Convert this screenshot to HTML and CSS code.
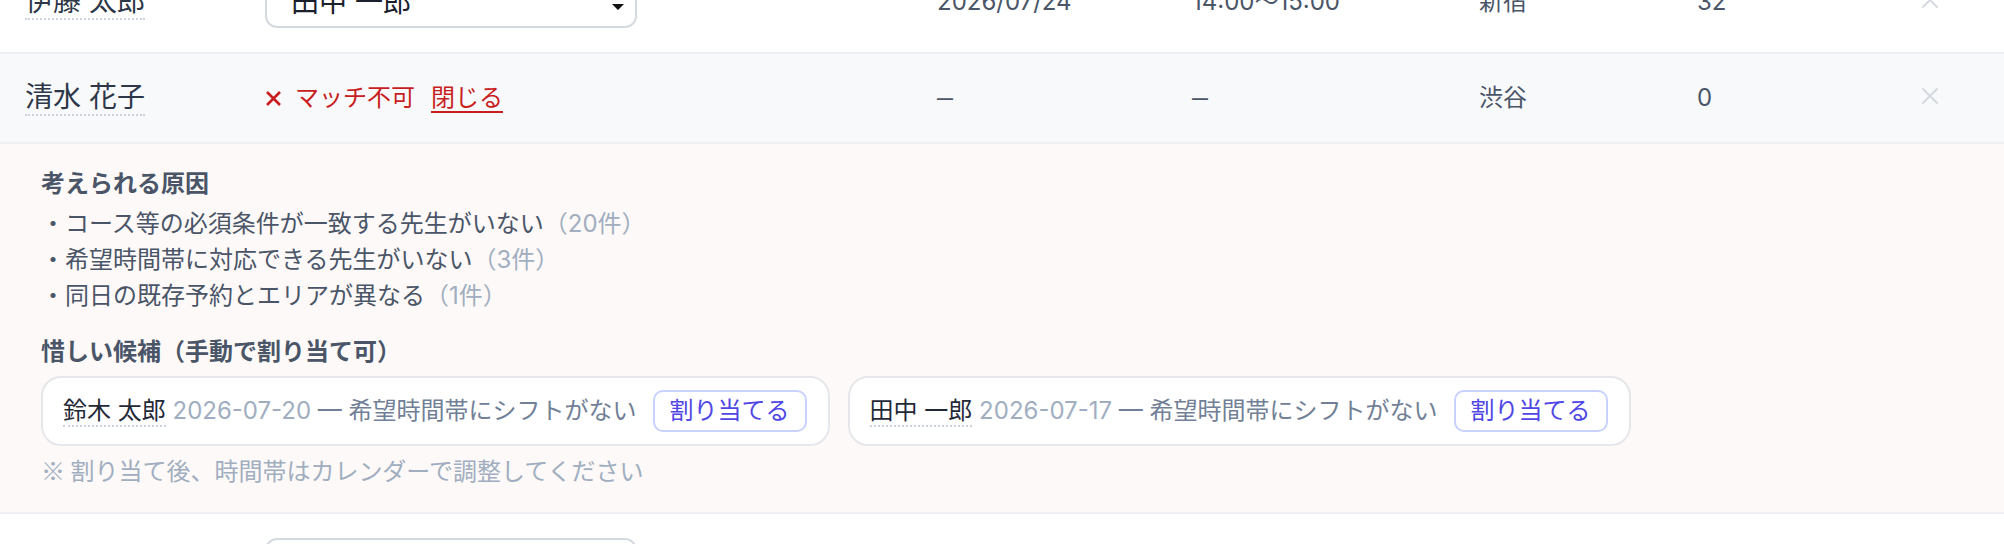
FILE: index.html
```html
<!DOCTYPE html>
<html lang="ja">
<head>
  <meta charset="UTF-8" />
  <meta name="viewport" content="width=device-width, initial-scale=1.0"/>
  <title>マッチング確認</title>
  <link rel="stylesheet" href="styles.css">
</head>
<body>

  <div class="list">

    <div class="row">
      <div class="cell"><span class="person">伊藤 太郎</span></div>
      <div class="cell">
        <div class="select-wrap">
          <select class="teacher-select">
            <option>田中 一郎</option>
            <option>鈴木 太郎</option>
          </select>
          <svg class="caret" width="12" height="16" viewBox="0 0 12 16"><path d="M6 0l6 6H0zM6 16l6-6H0z" fill="#111"/></svg>
        </div>
      </div>
      <div class="cell">2026/07/24</div>
      <div class="cell">14:00〜15:00</div>
      <div class="cell">新宿</div>
      <div class="cell">32</div>
      <div class="cell">
        <button class="remove" title="削除">
          <svg width="18" height="18" viewBox="0 0 18 18"><path d="M2 2l14 14M16 2L2 16" stroke="#d5d9e0" stroke-width="2" stroke-linecap="round"/></svg>
        </button>
      </div>
    </div>

    <div class="row unmatched">
      <div class="cell"><span class="person">清水 花子</span></div>
      <div class="cell">
        <div class="status">
          <span class="status-label">
            <svg width="17" height="17" viewBox="0 0 17 17"><path d="M2 2l13 13M15 2L2 15" stroke="currentColor" stroke-width="2.6"/></svg>
            マッチ不可
          </span>
          <a href="#" class="close-link">閉じる</a>
        </div>
      </div>
      <div class="cell"><span class="empty">—</span></div>
      <div class="cell"><span class="empty">—</span></div>
      <div class="cell">渋谷</div>
      <div class="cell">0</div>
      <div class="cell">
        <button class="remove" title="削除">
          <svg width="18" height="18" viewBox="0 0 18 18"><path d="M2 2l14 14M16 2L2 16" stroke="#d5d9e0" stroke-width="2" stroke-linecap="round"/></svg>
        </button>
      </div>
    </div>

    <div class="detail">
      <h4 class="detail-title">考えられる原因</h4>
      <ul class="reasons">
        <li>・コース等の必須条件が一致する先生がいない<span class="count">（20件）</span></li>
        <li>・希望時間帯に対応できる先生がいない<span class="count">（3件）</span></li>
        <li>・同日の既存予約とエリアが異なる<span class="count">（1件）</span></li>
      </ul>

      <h4 class="detail-title candidates-title">惜しい候補（手動で割り当て可）</h4>
      <div class="candidates">
        <div class="candidate">
          <p class="candidate-text"><span class="person small">鈴木 太郎</span> <span class="date">2026-07-20</span> — 希望時間帯にシフトがない</p>
          <button class="assign">割り当てる</button>
        </div>
        <div class="candidate">
          <p class="candidate-text"><span class="person small">田中 一郎</span> <span class="date">2026-07-17</span> — 希望時間帯にシフトがない</p>
          <button class="assign">割り当てる</button>
        </div>
      </div>
      <p class="note">※ 割り当て後、時間帯はカレンダーで調整してください</p>
    </div>

    <div class="row">
      <div class="cell"><span class="person">佐藤 美咲</span></div>
      <div class="cell">
        <div class="select-wrap">
          <select class="teacher-select">
            <option>鈴木 太郎</option>
          </select>
          <svg class="caret" width="12" height="16" viewBox="0 0 12 16"><path d="M6 0l6 6H0zM6 16l6-6H0z" fill="#111"/></svg>
        </div>
      </div>
      <div class="cell">2026/07/25</div>
      <div class="cell">10:00〜11:00</div>
      <div class="cell">池袋</div>
      <div class="cell">18</div>
      <div class="cell">
        <button class="remove" title="削除">
          <svg width="18" height="18" viewBox="0 0 18 18"><path d="M2 2l14 14M16 2L2 16" stroke="#d5d9e0" stroke-width="2" stroke-linecap="round"/></svg>
        </button>
      </div>
    </div>

  </div>

</body>
</html>
```

FILE: styles.css
```css
body {
  margin: 0;
  font-family: 'Inter', 'Noto Sans CJK JP', sans-serif;
  background-color: #ffffff;
  color: #4a5568;
}

/* the list is scrolled a little, first row is half out of view */
.list {
  margin-top: -48px;
}

.row {
  display: grid;
  grid-template-columns: 240px 672px 255px 287px 218px 224px 40px;
  align-items: center;
  padding: 24px 0 24px 25px;
  border-bottom: 2px solid #eef0f3;
  font-size: 24px;
  line-height: 40px;
}

.row.unmatched {
  background-color: #f8f9fb;
}

.cell {
  display: flex;
  align-items: center;
}

/* placeholder dash for empty date / time */
.empty {
  font-size: 16px;
  font-weight: 600;
}

.person {
  display: inline-block;
  font-size: 28px;
  line-height: 34px;
  color: #2d3748;
  border-bottom: 2px dotted #cbd2dc;
}

.person.small {
  font-size: 24px;
  line-height: 28px;
  color: #1f2937;
}

.select-wrap {
  position: relative;
  width: 372px;
}

.teacher-select {
  appearance: none;
  -webkit-appearance: none;
  width: 100%;
  height: 52px;
  padding: 0 48px 0 24px;
  font-family: inherit;
  font-size: 28px;
  color: #1a202c;
  background-color: #fff;
  border: 2px solid #d5d9e0;
  border-radius: 12px;
}

.caret {
  position: absolute;
  right: 13px;
  top: 50%;
  transform: translateY(-50%);
  pointer-events: none;
}

.remove {
  display: flex;
  padding: 0;
  border: none;
  background: none;
  cursor: pointer;
  margin-top: -4px;
}

.status {
  display: flex;
  align-items: center;
  gap: 16px;
  color: #c81e1e;
}

.status-label {
  display: flex;
  align-items: center;
  gap: 13px;
}

.close-link {
  color: #c81e1e;
  text-decoration: underline;
  text-decoration-thickness: 2px;
  text-underline-offset: 5px;
}

.detail {
  background-color: #fdf9f8;
  padding: 22px 41px 24px;
  border-bottom: 2px solid #eef0f3;
  font-size: 24px;
  line-height: 36px;
}

.detail-title {
  margin: 0 0 4px;
  font-size: 24px;
  font-weight: 700;
  color: #4a5568;
}

.candidates-title {
  margin: 20px 0 0;
}

.reasons {
  list-style: none;
  margin: 0;
  padding: 0;
}

.count {
  color: #a0aec0;
}

.candidates {
  display: flex;
  gap: 18px;
  margin-top: 6px;
}

.candidate {
  display: flex;
  align-items: center;
  gap: 16px;
  padding: 12px 21px 12px 20px;
  background-color: #fff;
  border: 2px solid #e5e7eb;
  border-radius: 20px;
}

.candidate-text {
  margin: 0;
  line-height: 30px;
  color: #718096;
  white-space: nowrap;
}

.date {
  color: #a0aec0;
}

.assign {
  font-family: inherit;
  font-size: 24px;
  line-height: 30px;
  padding: 4px 15px;
  color: #4f46e5;
  background-color: #fff;
  border: 2px solid #c7d2fe;
  border-radius: 10px;
  cursor: pointer;
}

.note {
  margin: 6px 0 0;
  font-family: 'Noto Sans CJK JP', sans-serif;
  color: #a0aec0;
}
```
